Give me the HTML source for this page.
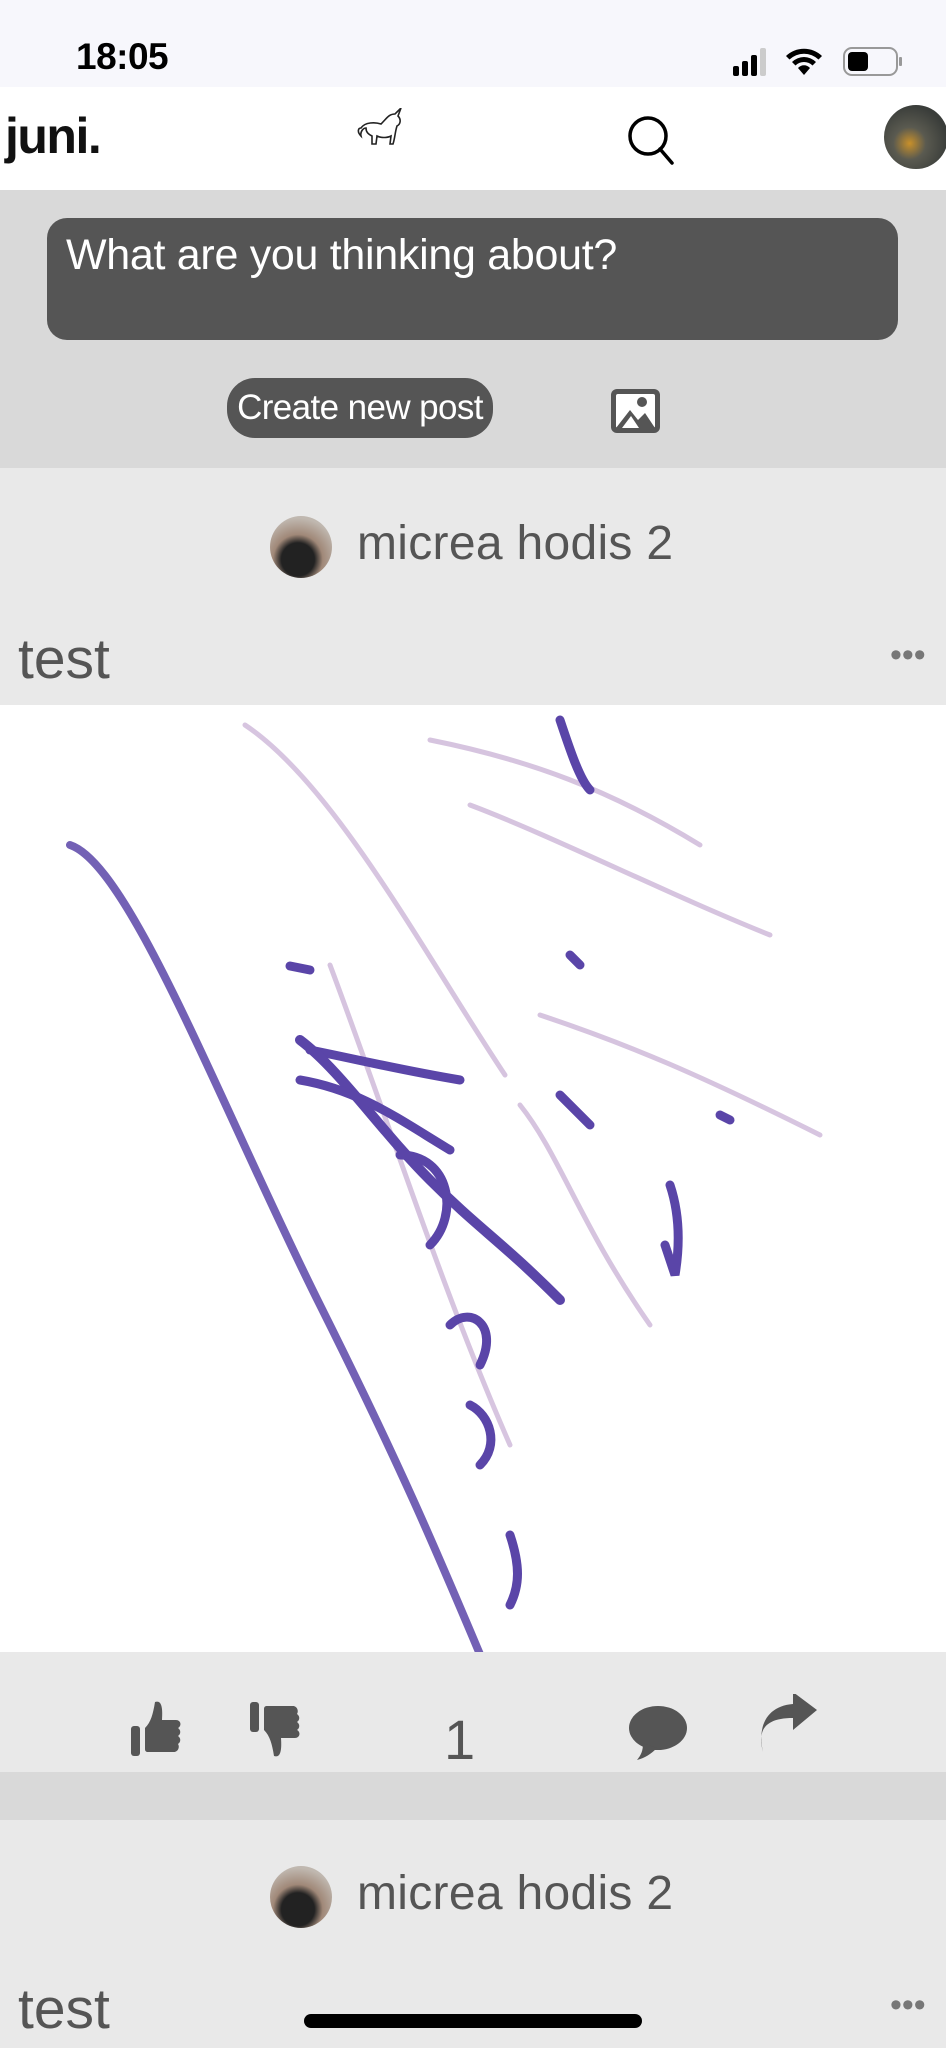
<!DOCTYPE html>
<html><head><meta charset="utf-8"><style>
*{margin:0;padding:0;box-sizing:border-box}
body{width:946px;height:2048px;overflow:hidden;background:#e9e9e9;font-family:"Liberation Sans",sans-serif;position:relative;color:#555}
.abs{position:absolute}
</style></head><body>
<div class="abs" style="left:0;top:0;width:946px;height:87px;background:#f7f7fc"></div>
<div class="abs" style="left:76px;top:36px;font-size:37px;font-weight:bold;color:#000;letter-spacing:-0.5px">18:05</div>
<svg class="abs" style="left:730px;top:44px" width="175" height="34" viewBox="0 0 175 34">
<rect x="3" y="22" width="6" height="10" rx="2" fill="#000"/><rect x="12" y="17" width="6" height="15" rx="2" fill="#000"/><rect x="21" y="11" width="6" height="21" rx="2" fill="#000"/><rect x="30" y="4" width="6" height="28" rx="2" fill="#ccc"/>
<path d="M56 12a26 26 0 0 1 36 0l-3.5 3.5a21 21 0 0 0-29 0z M62 18a17 17 0 0 1 24 0l-3.5 3.5a12 12 0 0 0-17 0z M68 24a8 8 0 0 1 12 0l-6 7z" fill="#000"/>
<rect x="114" y="4" width="53" height="27" rx="8" fill="none" stroke="#999" stroke-width="2"/><rect x="118" y="8" width="20" height="19" rx="4" fill="#000"/><rect x="169" y="13" width="3" height="9" rx="1" fill="#999"/>
</svg>
<div class="abs" style="left:0;top:87px;width:946px;height:103px;background:#fff"></div>
<div class="abs" style="left:5px;top:107px;font-size:50px;font-weight:bold;color:#111;letter-spacing:-1.5px">juni.</div>
<svg class="abs" style="left:353px;top:108px" width="52" height="48" viewBox="0 0 52 48"><path d="M8 20c4-6 14-6 20-4 6-6 8-10 14-10l6-6-3 8c3 3 3 8-1 10-2 6-2 12-4 18h-3l1-8c-4 2-10 2-14 0l-1 8h-4l0-8c-4-2-6-4-6-8-3 0-6 4-5 8-4-4-3-8 0-8z" fill="none" stroke="#222" stroke-width="1.6"/></svg>
<svg class="abs" style="left:624px;top:112px" width="54" height="54" viewBox="0 0 54 54"><circle cx="24" cy="24" r="18" fill="none" stroke="#000" stroke-width="3.5"/><path d="M36 37l12 14" stroke="#000" stroke-width="3.5" stroke-linecap="round"/></svg>
<div class="abs" style="left:884px;top:105px;width:64px;height:64px;border-radius:50%;background:radial-gradient(circle at 40% 60%,#c8902a 0,#5a5a50 30%,#3a3d3a 70%);overflow:hidden"></div>
<div class="abs" style="left:0;top:190px;width:946px;height:278px;background:#d9d9d9"></div>
<div class="abs" style="left:47px;top:218px;width:851px;height:122px;background:#555;border-radius:20px;color:#fff;font-size:43px;padding:13px 19px;letter-spacing:-0.3px">What are you thinking about?</div>
<div class="abs" style="left:227px;top:378px;width:266px;height:60px;background:#555;border-radius:28px;color:#fff;font-size:35px;line-height:60px;text-align:center;letter-spacing:-0.6px">Create new post</div>
<svg class="abs" style="left:609px;top:387px" width="53" height="48" viewBox="0 0 53 48"><rect x="2" y="2" width="49" height="44" rx="6" fill="#555"/><rect x="7" y="7" width="39" height="34" rx="2" fill="#fff"/><circle cx="33" cy="15" r="5" fill="#555"/><path d="M7 41l14-18 8 10 7-7 10 15z" fill="#555"/><path d="M13 41l9-12 8 12" fill="#fff"/></svg>
<div class="abs" style="left:270px;top:516px;width:62px;height:62px;border-radius:50%;background:radial-gradient(circle at 45% 70%,#222 0,#222 30%,#a08878 45%,#c0b8b0 75%)"></div>
<div class="abs" style="left:357px;top:516px;font-size:48px;color:#555;letter-spacing:0.3px">micrea hodis 2</div>
<div class="abs" style="left:18px;top:626px;font-size:57px;color:#555">test</div>
<div class="abs" style="left:890px;top:636px;font-size:34px;color:#777;letter-spacing:0px">•••</div>
<div class="abs" style="left:0;top:705px;width:946px;height:947px;background:#fff"></div>
<svg class="abs" style="left:0;top:705px" width="946" height="947" viewBox="0 0 946 947" fill="none" stroke-linecap="round">
<g stroke="#cdb6d8" stroke-width="5" opacity="0.8">
<path d="M245 20c90 60 180 230 260 350"/><path d="M430 35c100 20 180 50 270 105"/><path d="M470 100c80 30 200 90 300 130"/><path d="M540 310c90 30 160 60 280 120"/><path d="M520 400c40 50 60 120 130 220"/><path d="M330 260c60 160 110 320 180 480"/>
</g>
<g stroke="#5a45a8" stroke-width="9">
<path d="M70 140c60 20 150 260 250 460s130 280 190 420" stroke-width="8" opacity=".85"/>
<path d="M310 265l-20-4"/><path d="M310 345c50 10 90 20 150 30"/><path d="M300 335c40 30 80 90 130 140s70 60 130 120" stroke-width="10"/>
<path d="M300 375c60 10 100 40 150 70"/><path d="M560 15c10 30 20 60 30 70"/><path d="M400 450c50 0 60 60 30 90"/><path d="M450 620c20-20 50 0 30 40"/><path d="M470 700c20 10 30 40 10 60"/><path d="M510 830c10 30 10 50 0 70"/><path d="M670 480c10 30 10 60 5 90l-10-30"/><path d="M560 390l30 30"/><path d="M720 410l10 5"/><path d="M570 250l10 10"/>
</g></svg>
<div class="abs" style="left:0;top:1652px;width:946px;height:120px;background:#e9e9e9"></div>
<svg class="abs" style="left:130px;top:1700px" width="54" height="58" viewBox="0 0 54 58"><rect x="1" y="26" width="9" height="30" rx="3" fill="#555"/><path d="M15 28c6-6 8-14 10-26 6-2 8 4 7 18h14c5 0 6 6 2 8 3 2 3 6 0 8 3 2 3 6 0 8 2 3 0 8-4 8H18c-2 0-3-1-3-3z" fill="#555"/></svg>
<svg class="abs" style="left:249px;top:1700px" width="54" height="58" viewBox="0 0 54 58"><g transform="translate(0,58) scale(1,-1)"><rect x="1" y="26" width="9" height="30" rx="3" fill="#555"/><path d="M15 28c6-6 8-14 10-26 6-2 8 4 7 18h14c5 0 6 6 2 8 3 2 3 6 0 8 3 2 3 6 0 8 2 3 0 8-4 8H18c-2 0-3-1-3-3z" fill="#555"/></g></svg>
<div class="abs" style="left:444px;top:1707px;font-size:56px;color:#555">1</div>
<svg class="abs" style="left:627px;top:1705px" width="62" height="56" viewBox="0 0 62 56"><ellipse cx="31" cy="23" rx="29" ry="22" fill="#555"/><path d="M16 38c0 8-2 12-6 17 8-2 14-6 20-12z" fill="#555"/></svg>
<svg class="abs" style="left:757px;top:1694px" width="62" height="60" viewBox="0 0 62 60"><path d="M6 58C0 36 8 24 36 24V36L60 16 36-2V10C10 12 0 32 6 58z" fill="#555"/></svg>
<div class="abs" style="left:0;top:1772px;width:946px;height:48px;background:#d9d9d9"></div>
<div class="abs" style="left:270px;top:1866px;width:62px;height:62px;border-radius:50%;background:radial-gradient(circle at 45% 70%,#222 0,#222 30%,#a08878 45%,#c0b8b0 75%)"></div>
<div class="abs" style="left:357px;top:1866px;font-size:48px;color:#555;letter-spacing:0.3px">micrea hodis 2</div>
<div class="abs" style="left:18px;top:1976px;font-size:57px;color:#555">test</div>
<div class="abs" style="left:890px;top:1986px;font-size:34px;color:#777">•••</div>
<div class="abs" style="left:304px;top:2014px;width:338px;height:14px;border-radius:7px;background:#000"></div>
</body></html>
